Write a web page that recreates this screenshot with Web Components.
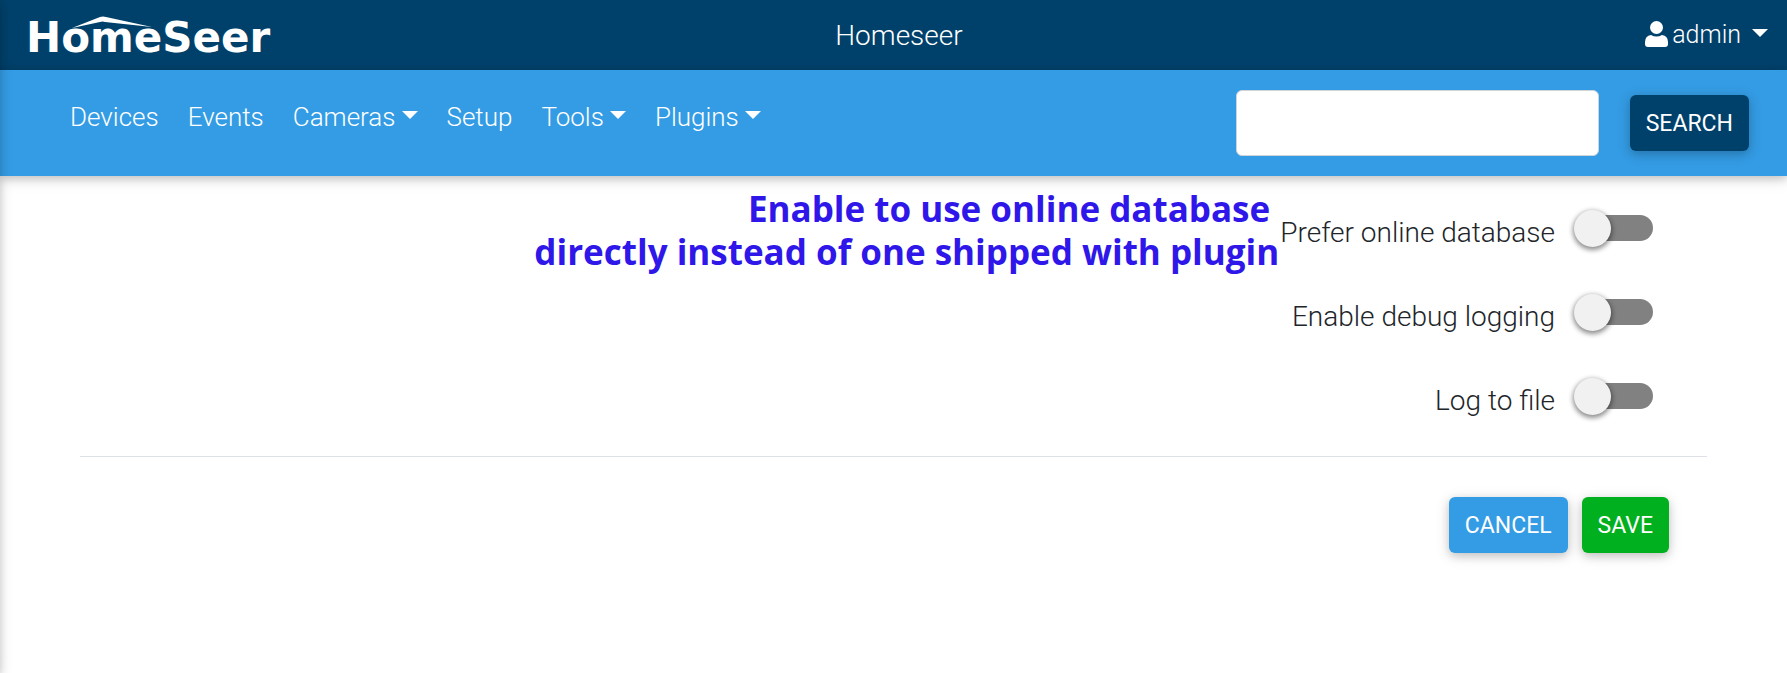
<!DOCTYPE html>
<html lang="en">
<head>
<meta charset="utf-8">
<title>Homeseer</title>
<style>
  body { margin: 0; background: #fff; color: #212529; font: 300 28px/42px Roboto, "Liberation Sans", sans-serif; }
</style>
</head>
<body>
<hs-page>
  <hs-topbar slot="top">Homeseer</hs-topbar>
  <hs-navbar slot="nav">
    <hs-navlink>Devices</hs-navlink>
    <hs-navlink>Events</hs-navlink>
    <hs-navlink menu>Cameras</hs-navlink>
    <hs-navlink>Setup</hs-navlink>
    <hs-navlink menu>Tools</hs-navlink>
    <hs-navlink menu>Plugins</hs-navlink>
  </hs-navbar>
  <hs-settings>
    <hs-note slot="note">Enable to use online database <br>directly instead of one shipped with plugin</hs-note>
    <hs-switch label="Prefer online database"></hs-switch>
    <hs-switch label="Enable debug logging"></hs-switch>
    <hs-switch label="Log to file"></hs-switch>
    <hs-button slot="actions" tone="primary">CANCEL</hs-button>
    <hs-button slot="actions" tone="success">SAVE</hs-button>
  </hs-settings>
</hs-page>
<script>
const define = (name, html, setup) => {
  const template = document.createElement('template');
  template.innerHTML = html;
  customElements.define(name, class extends HTMLElement {
    constructor() {
      super();
      this.attachShadow({ mode: 'open' }).append(template.content.cloneNode(true));
    }
    connectedCallback() { if (setup) setup(this, this.shadowRoot); }
  });
};

define('hs-page', `
  <style>
    :host { display: block; position: relative; min-height: 100vh; overflow: hidden; }
    /* shade cast by the closed side drawer */
    .drawer { position: absolute; top: 0; bottom: 0; right: 100%; width: 40px;
      box-shadow: 0 3px 8px rgba(0,0,0,.16), 0 3px 15px rgba(0,0,0,.12); z-index: 3; }
  </style>
  <div class="drawer"></div>
  <slot name="top"></slot>
  <slot name="nav"></slot>
  <slot></slot>`);

define('hs-caret', `
  <style>
    :host { display: inline-block; width: 16px; height: 8px; }
    svg { display: block; width: 100%; height: 100%; fill: currentColor; }
  </style>
  <svg viewBox="0 0 16 8" aria-hidden="true"><path d="M0 0H16L8 8Z"/></svg>`);

define('hs-logo', `
  <style>
    :host { display: block; position: relative; padding-top: 6px; }
    a { display: block; color: #fff; text-decoration: none; font: 700 42px/48px "DejaVu Sans", sans-serif; }
    svg { position: absolute; left: 46px; top: 8px; width: 84px; height: 16px; fill: #fff; }
  </style>
  <a href="#">HomeSeer</a>
  <svg viewBox="0 0 84 16" aria-hidden="true"><path d="M0 12L28 1Q31 0 34 1L80 11L33 6Q31 5 28 6Z"/></svg>`);

define('hs-topbar', `
  <style>
    :host { display: grid; grid-template-columns: 1fr auto 1fr; align-items: center; height: 70px;
      padding: 0 19px 0 26px; background: #00416b; color: #fff; box-sizing: border-box; }
    .title { font: inherit; margin: 0; padding: 2px 0 0 4px; }
    .user { justify-self: end; display: flex; align-items: center; color: inherit; text-decoration: none; font-size: 25px; }
    .user svg { width: 23px; height: 26px; fill: #fff; margin: 0 4px 2px 0; }
    hs-caret { margin-left: 11px; margin-bottom: 4px; }
  </style>
  <hs-logo></hs-logo>
  <h1 class="title"><slot></slot></h1>
  <a class="user" href="#">
    <svg viewBox="0 0 23 26" aria-hidden="true"><circle cx="11.500" cy="6.500" r="6.500"/><path d="M6 14Q11.500 17 17 14Q23 15 23 21V23Q23 26 20 26H3Q0 26 0 23V21Q0 15 6 14Z"/></svg>
    <span>admin</span><hs-caret></hs-caret>
  </a>`);

define('hs-navlink', `
  <style>
    :host { display: block; }
    a { display: flex; align-items: center; color: #fff; text-decoration: none; font-size: 26px; }
    hs-caret { display: none; margin: 0 0 4px 6px; }
    :host([menu]) hs-caret { display: block; }
  </style>
  <a href="#"><slot></slot><hs-caret></hs-caret></a>`);

define('hs-button', `
  <style>
    :host { display: block; }
    button { display: block; height: 56px; padding: 2px 16px 0; border: 0; border-radius: 6px; color: #fff; cursor: pointer;
      background: #00416b; font: 400 23px/34px Roboto, "Liberation Sans", sans-serif;
      box-shadow: 0 3px 8px rgba(0,0,0,.16), 0 3px 15px rgba(0,0,0,.12); }
    :host([tone=primary]) button { background: #349ce4; }
    :host([tone=success]) button { background: #00b01e; }
  </style>
  <button type="button"><slot></slot></button>`);

define('hs-navbar', `
  <style>
    :host { display: flex; position: relative; z-index: 1; justify-content: space-between; height: 106px; box-sizing: border-box;
      padding: 20px 38px 20px 70px; background: #349ce4;
      box-shadow: 0 3px 8px rgba(0,0,0,.16), 0 3px 15px rgba(0,0,0,.12); }
    nav { display: flex; gap: 29px; padding-top: 6px; }
    form { display: flex; align-items: center; gap: 31px; }
    input { width: 363px; height: 66px; box-sizing: border-box; padding: 9px 18px; border: 1px solid #ced4da;
      border-radius: 6px; background: #fff; font: inherit; }
  </style>
  <nav><slot></slot></nav>
  <form><input type="text" aria-label="Search"><hs-button>SEARCH</hs-button></form>`);

define('hs-note', `
  <style>
    :host { display: block; color: #2e17e8; font: 700 35px/43px "Open Sans", sans-serif; text-align: right; }
    slot { display: block; white-space: pre; }
  </style>
  <slot></slot>`);

define('hs-switch', `
  <style>
    :host { display: block; }
    label { display: flex; align-items: center; justify-content: flex-end; gap: 19px; }
    span { padding-top: 10px; }
    input { appearance: none; position: relative; margin: 0; width: 79px; height: 37px; cursor: pointer; }
    input::before { content: ""; position: absolute; inset: 5px 0 6px 6px; border-radius: 13px; background: #818181; }
    input::after { content: ""; position: absolute; left: 0; top: 0; width: 37px; height: 37px; border-radius: 50%;
      background: #f1f1f1; box-shadow: 0 2px 5px 1px rgba(0,0,0,.45); }
    input:checked::after { left: auto; right: 0; }
  </style>
  <label><span></span><input type="checkbox" role="switch"></label>`,
  (host, root) => { root.querySelector('span').textContent = host.getAttribute('label'); });

define('hs-settings', `
  <style>
    :host { display: block; padding: 11px 80px 0; }
    .body { display: flex; justify-content: flex-end; gap: 1px; padding-right: 54px; }
    .rows { display: grid; gap: 32px; padding: 15px 0 34px; }
    hr { margin: 0; border: 0; border-top: 1px solid #dee2e6; }
    .actions { display: flex; justify-content: flex-end; gap: 14px; padding: 40px 38px; }
  </style>
  <div class="body"><slot name="note"></slot><div class="rows"><slot></slot></div></div>
  <hr>
  <div class="actions"><slot name="actions"></slot></div>`);
</script>
</body>
</html>
